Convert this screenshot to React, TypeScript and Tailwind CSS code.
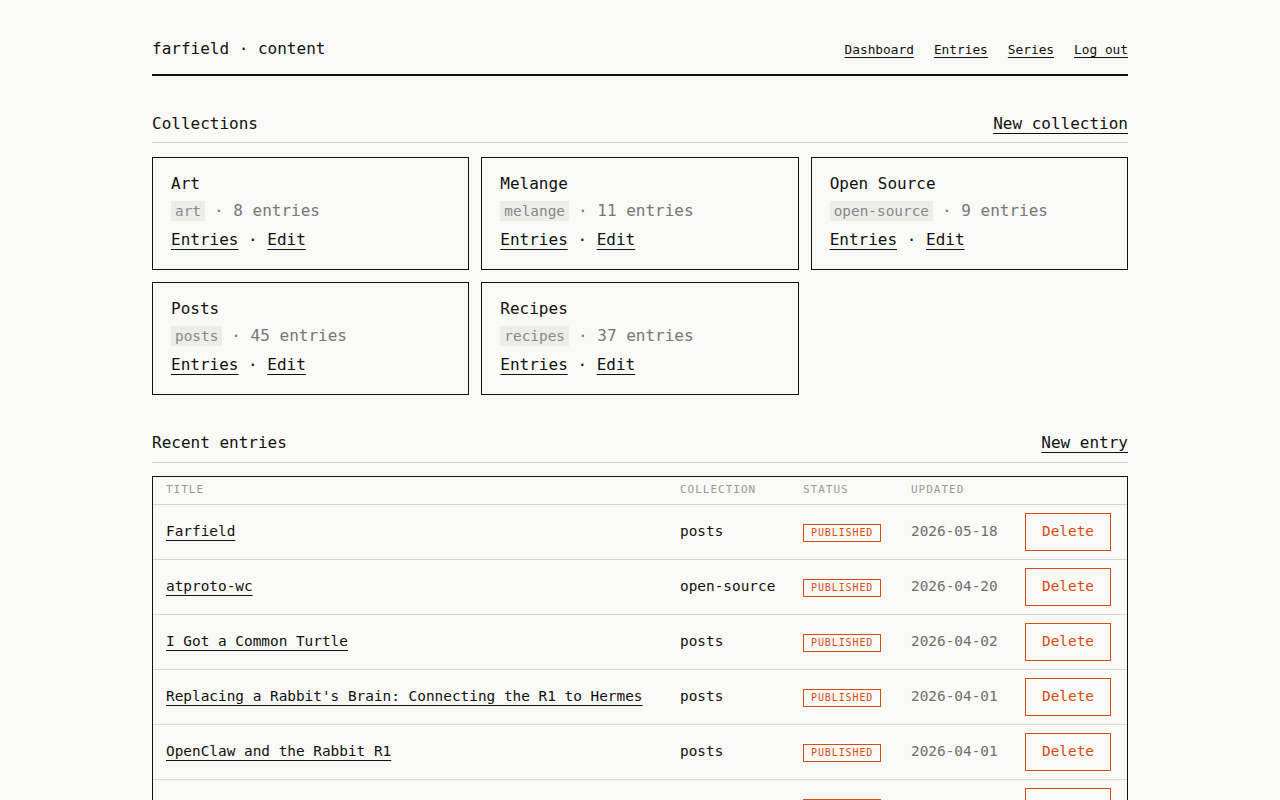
const collections = [
  { name: "Art", slug: "art", count: 8 },
  { name: "Melange", slug: "melange", count: 11 },
  { name: "Open Source", slug: "open-source", count: 9 },
  { name: "Posts", slug: "posts", count: 45 },
  { name: "Recipes", slug: "recipes", count: 37 },
];

const entries = [
  { title: "Farfield", collection: "posts", updated: "2026-05-18" },
  { title: "atproto-wc", collection: "open-source", updated: "2026-04-20" },
  { title: "I Got a Common Turtle", collection: "posts", updated: "2026-04-02" },
  { title: "Replacing a Rabbit's Brain: Connecting the R1 to Hermes", collection: "posts", updated: "2026-04-01" },
  { title: "OpenClaw and the Rabbit R1", collection: "posts", updated: "2026-04-01" },
  { title: "Slow Sunday Focaccia", collection: "recipes", updated: "2026-03-28" },
  { title: "Notes on Plain Text", collection: "posts", updated: "2026-03-15" },
];

const link = "underline underline-offset-[4px] decoration-1 decoration-[#111]";

function SectionHead({ title, action, tight }: { title: string; action: string; tight?: boolean }) {
  return (
    <div
      className={
        tight
          ? "flex items-center justify-between border-b border-[#d6d6d0] pb-[6px]"
          : "flex items-center justify-between border-b border-[#d6d6d0] pb-[7px]"
      }
    >
      <h2 className="text-[16px] leading-[24px]">{title}</h2>
      <a href="#" className={link}>{action}</a>
    </div>
  );
}

export default function App() {
  return (
    <div
      className="min-h-screen bg-[#f9f9f5] text-[#111]"
      style={{ fontFamily: '"DejaVu Sans Mono", "Liberation Mono", monospace' }}
    >
      <div className="mx-auto w-[976px] pt-[37px] pb-10">
        {/* Header */}
        <header className="flex items-baseline justify-between border-b-2 border-[#111] pb-[13px]">
          <div className="text-[16px] leading-[24px]">farfield · content</div>
          <nav className="flex gap-5 text-[12.8px]">
            <a href="#" className="underline underline-offset-[3px]">Dashboard</a>
            <a href="#" className="underline underline-offset-[3px]">Entries</a>
            <a href="#" className="underline underline-offset-[3px]">Series</a>
            <a href="#" className="underline underline-offset-[3px]">Log out</a>
          </nav>
        </header>

        {/* Collections */}
        <section className="mt-[36px]">
          <SectionHead title="Collections" action="New collection" tight />
          <div className="mt-[14px] grid grid-cols-3 gap-3">
            {collections.map((c) => (
              <div key={c.slug} className="border border-[#111] px-[18px] pt-[12px] pb-[14px]">
                <div className="text-[16px] leading-[27px]">{c.name}</div>
                <div className="flex items-center leading-[28px] text-[#777]">
                  <span className="bg-[#ededE8] px-[4px] text-[14.4px] leading-[20px] text-[#888]">{c.slug}</span>
                  <span className="ml-[9px] text-[16px]">· {c.count} entries</span>
                </div>
                <div className="text-[16px] leading-[30px]">
                  <a href="#" className={link}>Entries</a>
                  <span> · </span>
                  <a href="#" className={link}>Edit</a>
                </div>
              </div>
            ))}
          </div>
        </section>

        {/* Recent entries */}
        <section className="mt-[36px]">
          <SectionHead title="Recent entries" action="New entry" />
          <div className="mt-[13px] border border-[#111]">
            <div className="grid h-[28px] grid-cols-[514px_123px_108px_114px_1fr] items-center border-b border-[#d6d6d0] text-[11px] tracking-[0.09em] text-[#999]">
              <div className="px-[13px]">TITLE</div>
              <div className="px-[13px]">COLLECTION</div>
              <div className="px-[13px]">STATUS</div>
              <div className="px-[13px]">UPDATED</div>
              <div />
            </div>
            {entries.map((e, i) => (
              <div
                key={i}
                className="grid grid-cols-[514px_123px_108px_114px_1fr] items-center border-b border-[#d6d6d0] py-[8px] text-[14.4px] last:border-b-0"
              >
                <div className="px-[13px]">
                  <a href="#" className="underline underline-offset-[4px]">{e.title}</a>
                </div>
                <div className="px-[13px]">{e.collection}</div>
                <div className="px-[13px]">
                  <span className="inline-block border border-[#dc4a14] px-[7px] text-[10px] leading-[16px] tracking-[0.09em] text-[#dc4a14]">
                    PUBLISHED
                  </span>
                </div>
                <div className="px-[13px] text-[#6f6f6f]">{e.updated}</div>
                <div className="px-[13px]">
                  <button className="h-[38px] w-[86px] border border-[#dc4a14] text-[14.4px] text-[#dc4a14]">
                    Delete
                  </button>
                </div>
              </div>
            ))}
          </div>
        </section>
      </div>
    </div>
  );
}
